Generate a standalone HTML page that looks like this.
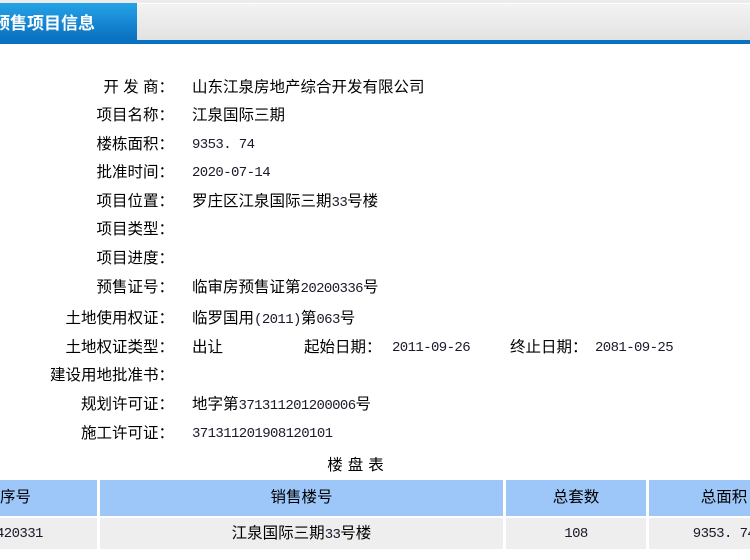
<!DOCTYPE html>
<html><head><meta charset="utf-8"><style>
body{margin:0;width:750px;height:560px;background:#fff;position:relative;overflow:hidden;font-family:"Liberation Sans","Noto Sans CJK SC","WenQuanYi Zen Hei",sans-serif;font-size:15.5px;color:#000}
.tab{position:absolute;left:0;top:3px;width:137px;height:37px;background:linear-gradient(#25a3e6,#0a6fc0);color:#fff;font-weight:bold;font-size:17px;line-height:42px;text-indent:-7px;white-space:nowrap;overflow:hidden}
.gray{position:absolute;left:137px;top:3px;right:0;height:37px;background:linear-gradient(#f3f3f3,#e2e2e2);border-top:1px solid #fff}
.bar{position:absolute;left:0;top:40px;width:750px;height:4px;background:#0a72c0}
.top{position:absolute;left:0;top:0;width:750px;height:3px;background:#ececec}
.l{position:absolute;right:576px;white-space:nowrap;line-height:20px;margin-top:2px}
.v{position:absolute;left:192px;white-space:nowrap;line-height:20px;margin-top:2px}
.n{font-family:"Liberation Mono",monospace;font-size:14px;letter-spacing:-0.6px;color:#1a1a2a}
.t{position:absolute;top:453px;left:0;width:716px;text-align:center;letter-spacing:5px}
.c{position:absolute;text-align:center;line-height:36px}
.h{top:480px;height:36px;background:#9cc7f8}
.d{top:518px;height:31px;line-height:32px;background:#eeeeee}
</style></head><body>
<div class="top"></div>
<div class="gray"></div>
<div class="tab">预售项目信息</div>
<div class="bar"></div>

<div class="l" style="top:76px">开 发 商：</div><div class="v" style="top:76px">山东江泉房地产综合开发有限公司</div>
<div class="l" style="top:104px">项目名称：</div><div class="v" style="top:104px">江泉国际三期</div>
<div class="l" style="top:133px">楼栋面积：</div><div class="v n" style="top:133px">9353. 74</div>
<div class="l" style="top:161px">批准时间：</div><div class="v n" style="top:161px">2020-07-14</div>
<div class="l" style="top:190px">项目位置：</div><div class="v" style="top:190px">罗庄区江泉国际三期<span class="n">33</span>号楼</div>
<div class="l" style="top:218px">项目类型：</div>
<div class="l" style="top:247px">项目进度：</div>
<div class="l" style="top:276px">预售证号：</div><div class="v" style="top:276px">临审房预售证第<span class="n">20200336</span>号</div>
<div class="l" style="top:307px">土地使用权证：</div><div class="v" style="top:307px">临罗国用<span class="n">(2011)</span>第<span class="n">063</span>号</div>
<div class="l" style="top:336px">土地权证类型：</div><div class="v" style="top:336px">出让</div>
<div class="v" style="top:336px;left:304px">起始日期：</div><div class="v n" style="top:336px;left:392px">2011-09-26</div>
<div class="v" style="top:336px;left:510px">终止日期：</div><div class="v n" style="top:336px;left:595px">2081-09-25</div>
<div class="l" style="top:364px">建设用地批准书：</div>
<div class="l" style="top:393px">规划许可证：</div><div class="v" style="top:393px">地字第<span class="n">371311201200006</span>号</div>
<div class="l" style="top:422px">施工许可证：</div><div class="v n" style="top:422px">371311201908120101</div>

<div class="t">楼盘表</div>
<div class="c h" style="left:0;width:97px;text-align:left">序号</div>
<div class="c h" style="left:100px;width:403px">销售楼号</div>
<div class="c h" style="left:506px;width:140px">总套数</div>
<div class="c h" style="left:649px;width:150px">总面积</div>
<div class="c d n" style="left:0;width:97px;text-align:left;text-indent:-4px">420331</div>
<div class="c d" style="left:100px;width:403px">江泉国际三期<span class="n">33</span>号楼</div>
<div class="c d n" style="left:506px;width:140px">108</div>
<div class="c d n" style="left:649px;width:150px">9353. 74</div>
</body></html>
